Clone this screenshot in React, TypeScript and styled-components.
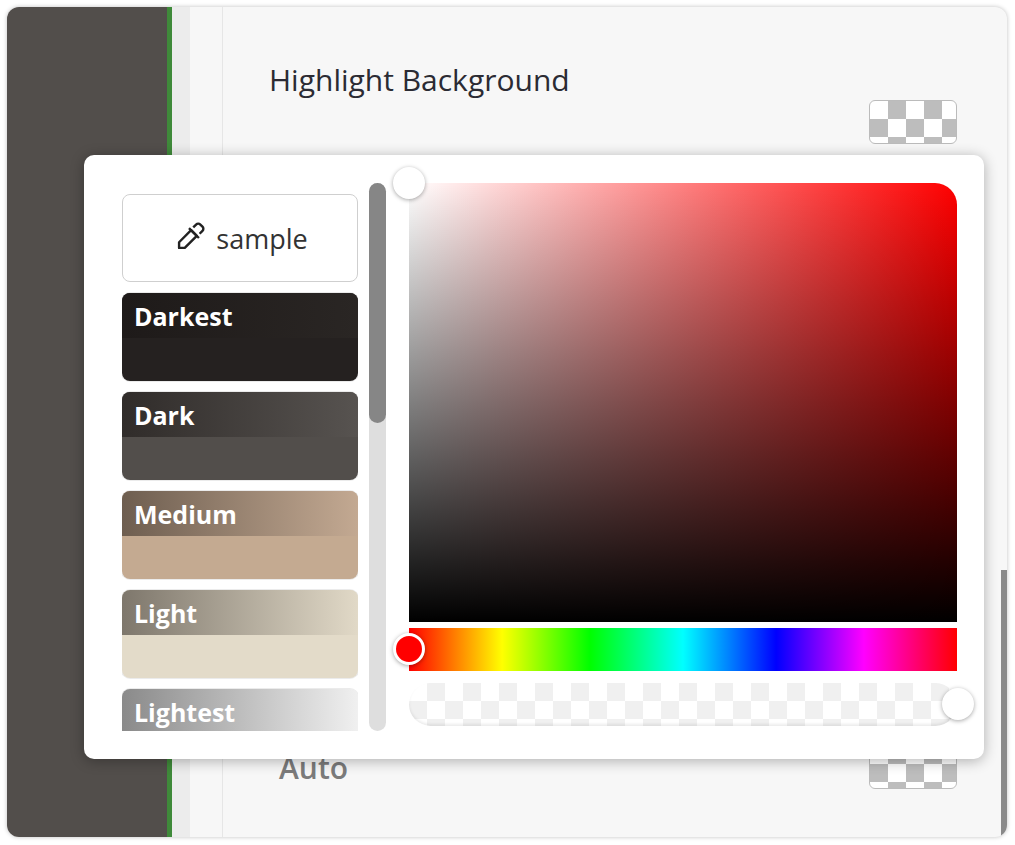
import React from "react";
import styled, { createGlobalStyle } from "styled-components";

const Global = createGlobalStyle`
  html, body { margin: 0; background: #fff; font-family: "Open Sans", "Liberation Sans", sans-serif; }
`;

const Frame = styled.div`
  position: relative;
  margin: 7px;
  width: 1000px;
  height: 830px;
  border-radius: 12px;
  overflow: hidden;
  display: flex;
  box-shadow: 0 0 4px rgba(0, 0, 0, 0.25);
  background: #f7f7f7;
`;

const DarkRail = styled.div`
  width: 160px;
  background: #524e4b;
  border-right: 5px solid #3f8a3a;
`;

const GreyRail = styled.div`
  width: 18px;
  background: #ececec;
`;

const Content = styled.div`
  flex: 1;
  display: flex;
  flex-direction: column;
  margin-left: 32px;
  border-left: 1px solid #e6e6e6;
  padding: 52px 50px 0 46px;
  position: relative;
`;

const Row = styled.div<{ $muted?: boolean }>`
  display: flex;
  justify-content: space-between;
  align-items: center;
  font-size: 30px;
  color: ${(p) => (p.$muted ? "#7b7b7b" : "#2b2b33")};
  font-weight: ${(p) => (p.$muted ? 600 : 400)};
`;

const Checker = styled.div`
  width: 86px;
  height: 42px;
  border-radius: 6px;
  border: 1px solid #bbb;
  background-color: #fff;
  background-image: conic-gradient(#bdbdbd 25%, #fff 0 50%, #bdbdbd 0 75%, #fff 0);
  background-size: 36px 36px;
`;

const EdgeBar = styled.div`
  position: absolute;
  right: 0;
  top: 563px;
  bottom: 0;
  width: 6px;
  background: #8a8a8a;
`;

const Popup = styled.div`
  position: absolute;
  left: 77px;
  top: 148px;
  width: 900px;
  height: 604px;
  background: #fff;
  border-radius: 10px;
  box-shadow: 0 2px 14px rgba(0, 0, 0, 0.3);
  display: flex;
  padding: 28px 27px 28px 38px;
  box-sizing: border-box;
  gap: 11px;
`;

const SwatchList = styled.div`
  width: 236px;
  display: flex;
  flex-direction: column;
  gap: 11px;
  overflow: hidden;
  padding-top: 11px;
`;

const SampleButton = styled.div`
  flex: 0 0 auto;
  height: 86px;
  border: 1px solid #cfcfcf;
  border-radius: 8px;
  display: flex;
  align-items: center;
  justify-content: center;
  gap: 10px;
  font-size: 27px;
  color: #333;
`;

const Swatch = styled.div<{ $solid: string; $from: string; $to: string }>`
  flex: 0 0 auto;
  height: 88px;
  border-radius: 8px;
  overflow: hidden;
  background: ${(p) => p.$solid};
  box-shadow: 0 0 0 1px rgba(0, 0, 0, 0.08);
  span {
    display: block;
    height: 45px;
    padding: 6px 12px 0;
    box-sizing: border-box;
    background: linear-gradient(90deg, ${(p) => p.$from}, ${(p) => p.$to});
    color: #fff;
    font-size: 25px;
    font-weight: 700;
  }
`;

const ScrollTrack = styled.div`
  width: 17px;
  border-radius: 9px;
  background: #dedede;
  position: relative;
  margin-right: 12px;
  &::after {
    content: "";
    position: absolute;
    left: 0;
    right: 0;
    top: 0;
    height: 240px;
    border-radius: 9px;
    background: #868686;
  }
`;

const Picker = styled.div`
  flex: 1;
  display: flex;
  flex-direction: column;
  gap: 6px;
  position: relative;
`;

const SatArea = styled.div`
  height: 439px;
  border-top-right-radius: 22px;
  background: linear-gradient(to top, #000, transparent),
    linear-gradient(to right, #fff, #f00);
`;

const HueBar = styled.div`
  height: 43px;
  background: linear-gradient(90deg, #f00, #ff0 17%, #0f0 33%, #0ff 50%, #00f 67%, #f0f 83%, #f00);
`;

const AlphaBar = styled.div`
  height: 43px;
  margin-top: 6px;
  border-radius: 22px;
  background-color: #fff;
  background-image: conic-gradient(#f0f0f0 25%, #fff 0 50%, #f0f0f0 0 75%, #fff 0);
  background-size: 36px 36px;
  box-shadow: inset 0 -2px 3px rgba(0, 0, 0, 0.08);
`;

const Handle = styled.div<{ $x: number; $y: number; $fill: string }>`
  position: absolute;
  left: ${(p) => p.$x}px;
  top: ${(p) => p.$y}px;
  width: 32px;
  height: 32px;
  margin: -16px 0 0 -16px;
  border-radius: 50%;
  background: ${(p) => p.$fill};
  border: 3px solid #fff;
  box-sizing: border-box;
  box-shadow: 0 1px 4px rgba(0, 0, 0, 0.35);
`;

const swatches = [
  { name: "Darkest", solid: "#252120", from: "#1e1a19", to: "#2a2624" },
  { name: "Dark", solid: "#524e4b", from: "#302c2a", to: "#575350" },
  { name: "Medium", solid: "#c4aa91", from: "#6e5e50", to: "#c3a992" },
  { name: "Light", solid: "#e3dbc9", from: "#7e776c", to: "#e1d9c7" },
  { name: "Lightest", solid: "#f2f2f2", from: "#8a8a8a", to: "#f0f0f0" },
];

function Dropper() {
  return (
    <svg width="34" height="34" viewBox="0 0 24 24" fill="none" stroke="#222" strokeWidth="1.7" strokeLinejoin="round">
      <path d="M13.5 6.5l4 4L9 19H5v-4z" />
      <path d="M12 5l7 7" />
      <path d="M15 4.5l2-2a2.1 2.1 0 0 1 3 0l1.5 1.5a2.1 2.1 0 0 1 0 3l-2 2" />
    </svg>
  );
}

export default function App() {
  return (
    <>
      <Global />
      <Frame>
        <DarkRail />
        <GreyRail />
        <Content>
          <Row style={{ marginLeft: 0 }}>Highlight Background</Row>
          <Row>
            <span />
            <Checker />
          </Row>
          <div style={{ flex: 1 }} />
          <Row $muted style={{ marginBottom: 48 }}>
            <span style={{ marginLeft: 10 }}>Auto</span>
            <Checker />
          </Row>
          <EdgeBar />
        </Content>
        <Popup>
          <SwatchList>
            <SampleButton>
              <Dropper />
              sample
            </SampleButton>
            {swatches.map((s) => (
              <Swatch key={s.name} $solid={s.solid} $from={s.from} $to={s.to}>
                <span>{s.name}</span>
              </Swatch>
            ))}
          </SwatchList>
          <ScrollTrack />
          <Picker>
            <SatArea />
            <HueBar />
            <AlphaBar />
            <Handle $x={0} $y={0} $fill="#fff" />
            <Handle $x={0} $y={466} $fill="#f00" />
            <Handle $x={549} $y={521} $fill="#fff" />
          </Picker>
        </Popup>
      </Frame>
    </>
  );
}
